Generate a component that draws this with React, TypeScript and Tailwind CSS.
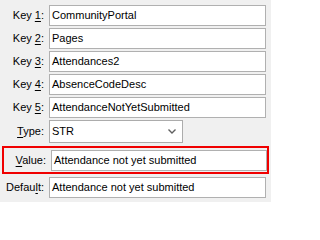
import React from "react"

const rows = [
  { pre: "Key ", key: "1", post: ":", value: "CommunityPortal" },
  { pre: "Key ", key: "2", post: ":", value: "Pages" },
  { pre: "Key ", key: "3", post: ":", value: "Attendances2" },
  { pre: "Key ", key: "4", post: ":", value: "AbsenceCodeDesc" },
  { pre: "Key ", key: "5", post: ":", value: "AttendanceNotYetSubmitted" },
]

function Label({ pre, k, post }: { pre: string; k: string; post: string }) {
  return (
    <span className="w-[42px] shrink-0 text-right pr-[1px] whitespace-nowrap">
      {pre}
      <span className="underline underline-offset-[2px]">{k}</span>
      {post}
    </span>
  )
}

function TextBox({ value }: { value: string }) {
  return (
    <div className="w-[217px] h-[21px] border border-[#b0b0b0] bg-white flex items-center pl-[2px] whitespace-nowrap overflow-hidden">
      {value}
    </div>
  )
}

export default function App() {
  return (
    <div
      className="w-[271px] h-[202px] bg-[#f0f0f0] text-[11px] text-black pt-[5px] flex flex-col overflow-hidden"
      style={{ fontFamily: '"Liberation Sans", Arial, sans-serif' }}
    >
      <div className="flex flex-col gap-[2px]">
        {rows.map((r) => (
          <div key={r.key} className="flex items-center gap-[4px] pl-[3px]">
            <Label pre={r.pre} k={r.key} post={r.post} />
            <TextBox value={r.value} />
          </div>
        ))}
        <div className="flex items-center gap-[4px] pl-[3px]">
          <Label pre="" k="T" post="ype:" />
          <div className="w-[134px] h-[23px] border border-[#acacac] bg-white flex items-center justify-between pl-[2px] pr-[6px]">
            <span>STR</span>
            <svg width="8" height="5" viewBox="0 0 8 5">
              <path d="M0.5 0.5 L4 4 L7.5 0.5" fill="none" stroke="#606060" strokeWidth="1.4" />
            </svg>
          </div>
        </div>
      </div>
      <div className="mt-[3px] mx-[2px] w-[267px] h-[28px] border-2 border-[#f00000] flex items-center gap-[4px] pl-[1px]">
        <Label pre="" k="V" post="alue:" />
        <TextBox value="Attendance not yet submitted" />
      </div>
      <div className="mt-[3px] flex items-center gap-[4px] pl-[3px]">
        <Label pre="Defau" k="l" post="t:" />
        <TextBox value="Attendance not yet submitted" />
      </div>
    </div>
  )
}
